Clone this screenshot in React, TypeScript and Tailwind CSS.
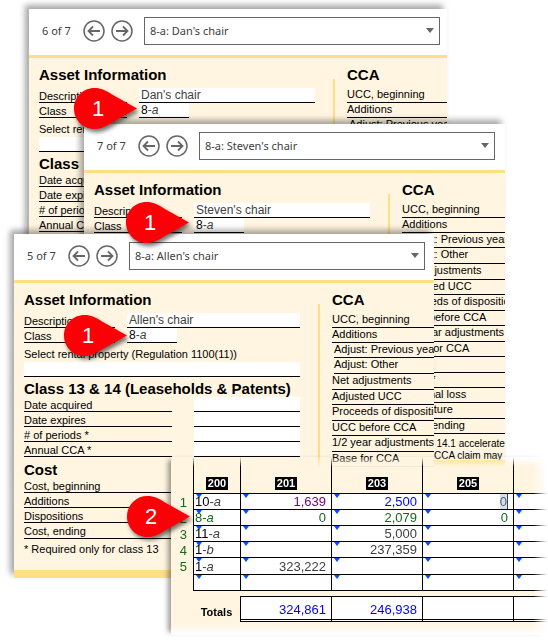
import type { ReactNode } from "react";
import clsx from "clsx";

const lineClass = "border-b border-black";
const fieldClass =
  "block h-[15px] border-b border-black bg-white px-[2px] text-[12px] leading-[14px] text-neutral-700 outline-none";
const headingClass = "whitespace-nowrap text-[15px] leading-4 font-bold";

interface CcaLine {
  label: string;
  tall?: boolean;
  indent?: boolean;
}

const CCA_LINES: CcaLine[] = [
  { label: "UCC, beginning" },
  { label: "Additions" },
  { label: "Adjust: Previous year", indent: true },
  { label: "Adjust: Other", indent: true, tall: true },
  { label: "Net adjustments", tall: true },
  { label: "Adjusted UCC" },
  { label: "Proceeds of disposition", tall: true },
  { label: "UCC before CCA" },
  { label: "1/2 year adjustments", tall: true },
  { label: "Base for CCA" },
  { label: "Rate", tall: true },
  { label: "CCA\u00a0\u00a0*" },
  { label: "Terminal loss" },
  { label: "Recapture", tall: true },
  { label: "UCC, ending" },
];

const LEASE_LINES = ["Date acquired", "Date expires", "# of periods *", "Annual CCA *"];
const COST_LINES = ["Cost, beginning", "Additions", "Dispositions", "Cost, ending"];

function RoundButton({ label, back }: { label: string; back?: boolean }) {
  return (
    <button type="button" aria-label={label} className="shrink-0 text-[#666]">
      <svg
        width="22"
        height="22"
        viewBox="0 0 22 22"
        fill="none"
        stroke="currentColor"
        className={clsx("block", back && "-scale-x-100")}
      >
        <circle cx="11" cy="11" r="10" strokeWidth="1.5" />
        <path d="M5 11h11.5M12 6.5l4.5 4.5-4.5 4.5" strokeWidth="1.8" />
      </svg>
    </button>
  );
}

function AssetWindow({
  id,
  position,
  name,
  className,
  labelClass,
}: {
  id: string;
  position: string;
  name: string;
  className: string;
  labelClass: string;
}) {
  return (
    <section
      className={clsx(
        "min-w-0 self-start bg-[#fff5e1] shadow-[-4px_-4px_6px_rgba(0,0,0,0.35)]",
        className,
      )}
    >
      <header className="flex items-center border-b-3 border-[#ffdf85] bg-white pt-2 pr-[7px] pb-[10px] pl-[13px] font-['Noto_Sans',sans-serif] text-[11px] text-neutral-700">
        <span className="w-[41px] shrink-0 whitespace-nowrap">{position}</span>
        <div className="mr-[11px] flex gap-[6px]">
          <RoundButton label="Previous asset" back />
          <RoundButton label="Next asset" />
        </div>
        <div className="relative max-w-[296px] min-w-0 flex-1">
          <select
            aria-label="Asset"
            className="block h-7 w-full appearance-none border border-[#666] bg-white pl-[5px] outline-none"
          >
            <option>{`8-a: ${name}`}</option>
          </select>
          <svg
            width="8"
            height="5"
            viewBox="0 0 8 5"
            className="pointer-events-none absolute top-[11px] right-[6px]"
          >
            <path d="M0 0h8L4 5z" fill="#666" />
          </svg>
        </div>
      </header>

      <div className="flex overflow-hidden pl-[10px]">
        <div className="w-[276px] shrink-0 pt-[9px] pb-[13px]">
          <h2 className={headingClass}>Asset Information</h2>
          <div className="mt-[5px] flex">
            <div className={clsx("shrink-0 pr-3", labelClass)}>
              <label htmlFor={`${id}-description`} className={clsx("block h-[15px] leading-4", lineClass)}>
                Description
              </label>
            </div>
            <input id={`${id}-description`} defaultValue={name} className={clsx(fieldClass, "min-w-0 flex-1")} />
          </div>
          <div className="flex">
            <div className={clsx("shrink-0 pr-3", labelClass)}>
              <label htmlFor={`${id}-class`} className={clsx("block h-[15px] leading-4", lineClass)}>
                Class
              </label>
            </div>
            <output id={`${id}-class`} className={clsx(fieldClass, "w-[50px]")}>
              <span className="text-black">8</span>-<i>a</i>
            </output>
          </div>
          <label htmlFor={`${id}-rental`} className="mt-[3px] block leading-4">
            Select rental property (Regulation 1100(11))
          </label>
          <input id={`${id}-rental`} className={clsx(fieldClass, "w-full")} />

          <h2 className={clsx(headingClass, "mt-1")}>Class 13 &amp; 14 (Leaseholds &amp; Patents)</h2>
          {LEASE_LINES.map((label, i) => (
            <div key={label} className="flex justify-between">
              <label htmlFor={`${id}-lease-${i}`} className={clsx("h-[15px] w-[148px] leading-4", lineClass)}>
                {label}
              </label>
              <input id={`${id}-lease-${i}`} className={clsx(fieldClass, "w-[106px]")} />
            </div>
          ))}

          <h2 className={clsx(headingClass, "mt-[5px]")}>Cost</h2>
          {COST_LINES.map((label, i) => (
            <div
              key={label}
              className={clsx("w-[148px] leading-4", lineClass, i === 3 ? "h-4" : "h-[15px]")}
            >
              {label}
            </div>
          ))}
          <p className="mt-[2px] leading-4">* Required only for class 13</p>
        </div>

        <div className="mt-[21px] ml-[18px] w-[2px] shrink-0 bg-[#ffdf85]" />

        <div className="ml-3 min-w-0 flex-1 pt-[9px]">
          <h2 className={clsx(headingClass, "mb-[5px]")}>CCA</h2>
          {CCA_LINES.map((line) => (
            <div
              key={line.label}
              className={clsx(
                "leading-3 whitespace-nowrap",
                lineClass,
                line.tall ? "h-4" : "h-[15px]",
                line.indent && "ml-[2px]",
              )}
            >
              {line.label}
            </div>
          ))}
          <p className="h-0 pt-1 text-[10px] leading-3 whitespace-nowrap">
            * Class 14.1 accelerated
            <br />
            <span className="pl-8">CCA claim may be</span>
          </p>
        </div>
      </div>
      <div className="h-2 bg-[#ffdf85]" />
    </section>
  );
}

interface TableRow {
  code: string;
  suffix: string;
  cells: [string, string, string];
  tones?: [string, string, string];
  codeTone?: string;
}

const GREEN = "text-[#14691a]";

const ROWS: TableRow[] = [
  {
    code: "10",
    suffix: "a",
    cells: ["1,639", "2,500", "0"],
    tones: ["text-[#800080]", "text-[#0000ff]", "text-[#5a6472]"],
  },
  { code: "8", suffix: "a", cells: ["0", "2,079", "0"], tones: [GREEN, GREEN, GREEN], codeTone: GREEN },
  { code: "11", suffix: "a", cells: ["", "5,000", ""] },
  { code: "1", suffix: "b", cells: ["", "237,359", ""] },
  { code: "1", suffix: "a", cells: ["323,222", "", ""] },
  { code: "", suffix: "", cells: ["", "", ""] },
];

function Cell({ className, children }: { className?: string; children?: ReactNode }) {
  return (
    <td className={clsx("relative border-b border-l border-black bg-white p-0 whitespace-nowrap", className)}>
      <svg width="6" height="4" viewBox="0 0 6 4" className="absolute top-0 left-[2px]">
        <path d="M0 0h6L3 4z" fill="#0050ff" />
      </svg>
      {children}
    </td>
  );
}

function ClassTable() {
  return (
    <section className="mt-[457px] mr-px ml-[171px] min-w-0 self-start shadow-[-6px_0_5px_-3px_rgba(0,0,0,0.4)]">
      <div className="bg-[#fff5e1] mask-[linear-gradient(to_bottom,transparent,black_10px,black_calc(100%-12px),transparent),linear-gradient(to_right,black_calc(100%-14px),transparent)] mask-intersect pb-[13px]">
        <table className="w-full table-fixed border-separate border-spacing-0 text-[13px] leading-[15px] text-neutral-700">
          <colgroup>
            <col className="w-[22px]" />
            <col className="w-[47px]" />
            <col className="w-[91px]" />
            <col className="w-[91px]" />
            <col className="w-[91px]" />
            <col />
          </colgroup>
          <thead>
            <tr className="h-[37px]">
              <td className="p-0" />
              {["200", "201", "203", "205"].map((code) => (
                <th key={code} className="border-b border-l border-black p-0 pb-[3px] align-bottom">
                  <span className="inline-block bg-black px-[2px] text-[11px] leading-[13px] font-bold text-white">
                    {code}
                  </span>
                </th>
              ))}
              <td className="border-b border-l border-black p-0" />
            </tr>
          </thead>
          <tbody>
            {ROWS.map((row, i) => (
              <tr key={i} className={i === 4 ? "h-[17px]" : "h-4"}>
                <td className={clsx("p-0 pr-[6px] text-right", GREEN)}>{i < 5 ? i + 1 : null}</td>
                <Cell className={clsx("pl-px", row.codeTone)}>
                  {row.code ? (
                    <span className="relative">
                      <span className={row.codeTone ?? "text-black"}>{row.code}</span>-<i>{row.suffix}</i>
                    </span>
                  ) : null}
                </Cell>
                {row.cells.map((value, j) => (
                  <Cell key={j} className={clsx("pr-[5px] text-right", row.tones?.[j])}>
                    {i === 0 && j === 2 ? (
                      <span className="inline-block border-r border-[#444] bg-[#d3deee] leading-[15px]">
                        {value}
                      </span>
                    ) : (
                      value
                    )}
                  </Cell>
                ))}
                <Cell />
              </tr>
            ))}
          </tbody>
          <tfoot>
            <tr className="h-[5px]">
              <td colSpan={6} className="p-0" />
            </tr>
            <tr className="h-[26px] text-[#0000ff]">
              <td className="p-0" />
              <th className="p-0 pt-[6px] text-[11px] font-bold text-black">Totals</th>
              {["324,861", "246,938", "", ""].map((total, i) => (
                <td
                  key={i}
                  className="border-t border-b-3 border-l border-black bg-white p-0 pt-[3px] pr-[5px] text-right [border-bottom-style:double]"
                >
                  {total}
                </td>
              ))}
            </tr>
          </tfoot>
        </table>
      </div>
    </section>
  );
}

function Marker({ value, className }: { value: string; className: string }) {
  return (
    <div className={clsx("absolute h-[41px] w-[63px]", className)}>
      <svg
        width="63"
        height="41"
        viewBox="0 0 63 41"
        className="absolute inset-0 overflow-visible drop-shadow-[2px_3px_2px_rgba(0,0,0,0.55)]"
      >
        <path
          d="M63 20.5L38 34.5C32 38.500 27 41 20.500 41C9 41 0 32 0 20.500C0 9 9 0 20.500 0C27 0 32 2.500 38 6.500Z"
          fill="#fb0007"
        />
      </svg>
      <span className="relative block w-12 text-center text-[22px] leading-[41px] text-white">
        {value}
      </span>
    </div>
  );
}

export default function App() {
  return (
    <main className="relative grid min-h-screen overflow-hidden bg-white font-['Liberation_Sans',Arial,sans-serif] text-[11px] text-black *:[grid-area:1/1]">
      <AssetWindow
        id="dan"
        position="6 of 7"
        name="Dan's chair"
        className="mt-[9px] mr-[101px] ml-[29px]"
        labelClass="w-[100px]"
      />
      <AssetWindow
        id="steven"
        position="7 of 7"
        name="Steven's chair"
        className="mt-[124px] mr-[43px] ml-[84px]"
        labelClass="w-[100px]"
      />
      <AssetWindow
        id="allen"
        position="5 of 7"
        name="Allen's chair"
        className="mt-[234px] mr-[114px] ml-[14px]"
        labelClass="w-[103px]"
      />
      <ClassTable />
      <Marker value="1" className="top-[88px] left-[74px]" />
      <Marker value="1" className="top-[202px] left-[126px]" />
      <Marker value="1" className="top-[315px] left-[64px]" />
      <Marker value="2" className="top-[496px] left-[127px]" />
    </main>
  );
}
